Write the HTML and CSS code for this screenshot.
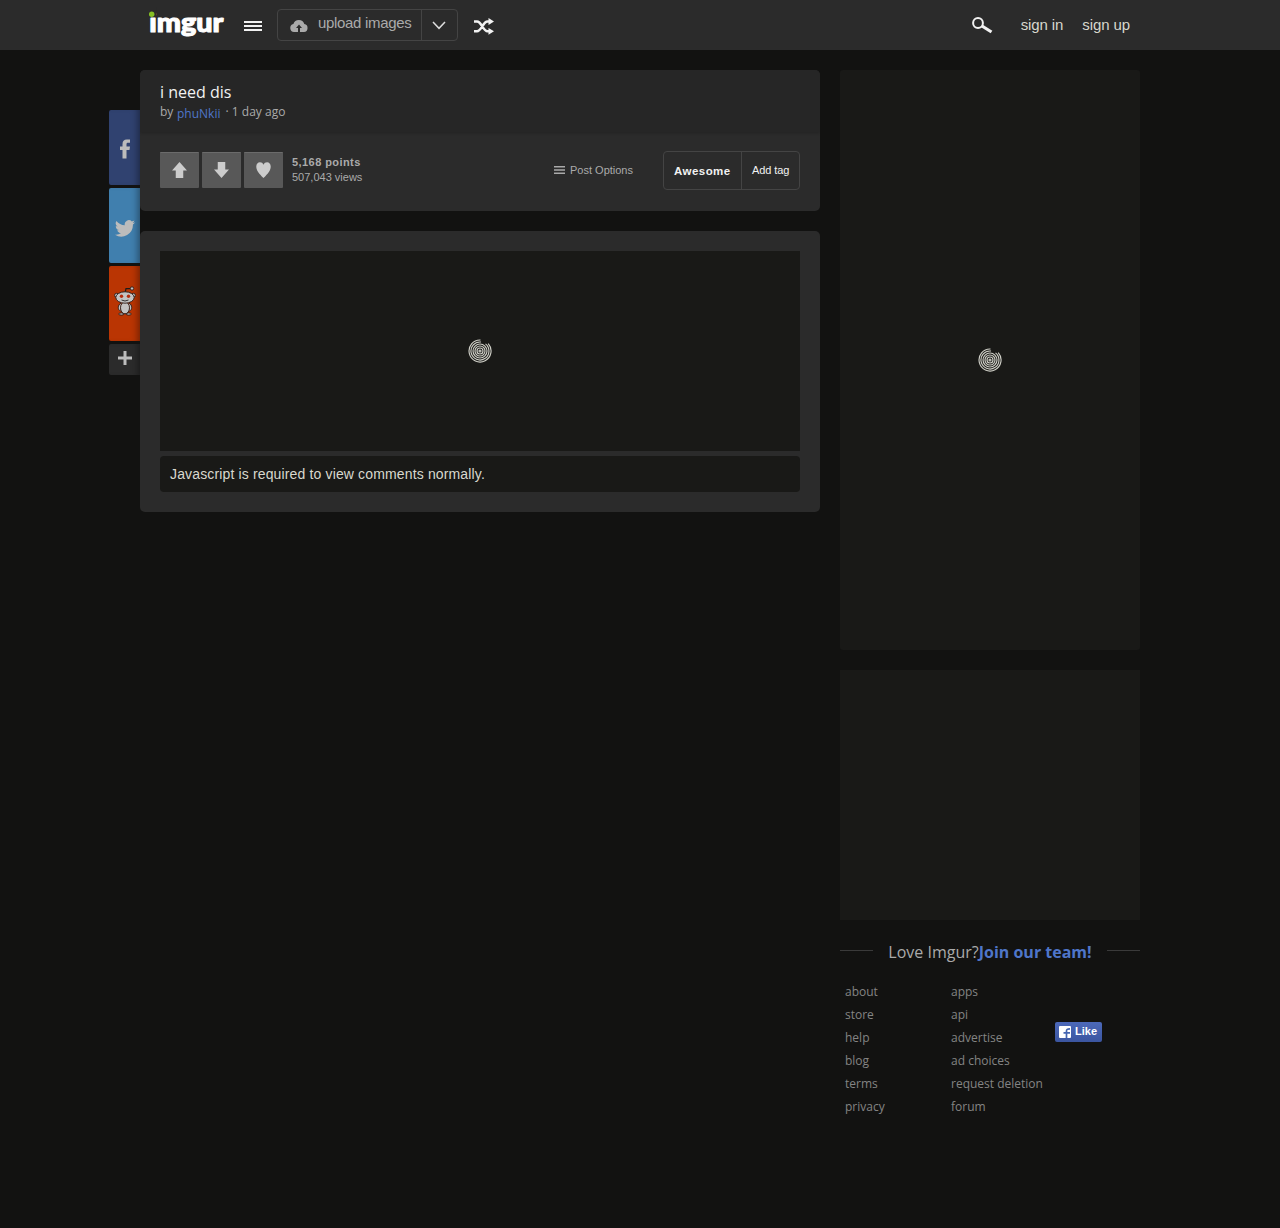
FILE: index.html
```html
<!DOCTYPE html>
<html lang="en">
<head>
<meta charset="utf-8">
<title>i need dis - Imgur</title>
<link rel="stylesheet" href="styles.css">
</head>
<body>
<header class="topbar">
  <div class="topbar-inner">
    <a class="logo"><svg width="78" height="36" viewBox="0 0 78 36"><text class="logo-text" x="1.300" y="24.800" textLength="74" lengthAdjust="spacingAndGlyphs">imgur</text><rect x="0" y="0" width="8.500" height="10" fill="#2b2b2b"/><circle cx="3.700" cy="7.300" r="2.700" fill="#85bf25"/></svg></a>
    <a class="menu"><svg width="18" height="10"><path d="M0 1h18M0 5h18M0 9h18" stroke="#f2f2f2" stroke-width="2"/></svg></a>
    <div class="upload">
      <a class="upload-main"><svg width="18" height="12" viewBox="0 0 18 12"><path fill="#aaa" d="M4 12a4 4 0 0 1-.6-7.900A5.700 5.700 0 0 1 14.300 4.100 4 4 0 0 1 14 12h-4V8h2L9 4.500 6 8h2v4z"/></svg><span>upload images</span></a>
      <a class="upload-more"><svg width="14" height="9" viewBox="0 0 14 9"><path d="M1 1l6 6.300L13 1" fill="none" stroke="#ddd" stroke-width="1.500"/></svg></a>
    </div>
    <a class="shuffle"><svg width="20" height="17" viewBox="0 0 20 17"><path d="M0 3.500h3c4.500 0 6 9.800 10.500 9.800H16M0 13.300h3c4.500 0 6-9.800 10.500-9.800H16" fill="none" stroke="#f2f2f2" stroke-width="2.500"/><path d="M14.500 0L20 3.500l-5.500 3.400zM14.500 9.900l5.500 3.400-5.500 3.500z" fill="#f2f2f2"/></svg></a>
    <nav class="account">
      <a class="search"><svg width="21" height="17" viewBox="0 0 21 17"><circle cx="6" cy="6" r="4.900" fill="none" stroke="#f2f2f2" stroke-width="2"/><path d="M10 9l9.500 6" stroke="#f2f2f2" stroke-width="3.200"/></svg></a>
      <a class="signin">sign in</a><a class="signup">sign up</a>
    </nav>
  </div>
</header>
<div class="page">
  <aside class="share">
    <a class="share-btn facebook"><svg width="12" height="20" viewBox="0 0 12 20"><path fill="#bcbcbc" d="M3.500 19.500V11H1V7.500h2.500V5.200C3.500 2 5 .5 7.800.5H11v3.300H9C7.800 3.800 7.500 4.300 7.500 5.300v2.200H11l-.5 3.500h-3v8.500z"/></svg></a>
    <a class="share-btn twitter"><svg width="20" height="17" viewBox="0 0 24 20"><path fill="#bcbcbc" d="M24 2.400a10 10 0 0 1-2.800.8A5 5 0 0 0 23.300.5a10 10 0 0 1-3.100 1.200A4.900 4.900 0 0 0 11.800 6.200 14 14 0 0 1 1.700 1a4.900 4.900 0 0 0 1.500 6.600 5 5 0 0 1-2.200-.6 4.900 4.900 0 0 0 3.900 4.900 5 5 0 0 1-2.200.1 4.900 4.900 0 0 0 4.600 3.400A9.900 9.900 0 0 1 0 17.500 14 14 0 0 0 21.500 5.100 10 10 0 0 0 24 2.400z"/></svg></a>
    <a class="share-btn reddit"><svg width="22" height="30" viewBox="0 0 22 30"><path d="M11 7l1-4.500 5 .2" fill="none" stroke="#1b1b1b" stroke-width="1.200"/><g fill="#c3c3c3" stroke="#2a1a15" stroke-width=".9"><circle cx="18" cy="2.500" r="1.700"/><circle cx="2.600" cy="9.300" r="2"/><circle cx="19.400" cy="9.300" r="2"/><ellipse cx="7.300" cy="28" rx="2.700" ry="1.100"/><ellipse cx="14.700" cy="28" rx="2.700" ry="1.100"/><path d="M7 17c-3.500 2-3.500 7-.5 8M15 17c3.500 2 3.500 7 .5 8"/><ellipse cx="11" cy="21.800" rx="4.500" ry="6"/><ellipse cx="11" cy="11.500" rx="9.200" ry="5.700"/></g><circle cx="7.500" cy="10.300" r="1.700" fill="#b52b0c"/><circle cx="14.500" cy="10.300" r="1.700" fill="#b52b0c"/><path d="M7.500 14q3.500 2 7 0" fill="none" stroke="#333"/></svg></a>
    <a class="share-btn more"><svg width="14" height="14"><path d="M7 0v14M0 7h14" stroke="#bcbcbc" stroke-width="3"/></svg></a>
  </aside>
  <main class="main">
    <section class="card">
      <div class="post-head">
        <h1>i need dis</h1>
        <p>by <a class="author">phuNkii</a> · 1 day ago</p>
      </div>
      <div class="post-bar">
        <div class="votes">
          <a class="vote"><svg width="15" height="16" viewBox="0 0 16 16" preserveAspectRatio="none"><path d="M8 0l8 8.500h-4V16H4V8.500H0z" fill="#ccc"/></svg></a>
          <a class="vote"><svg width="15" height="16" viewBox="0 0 16 16" preserveAspectRatio="none"><path d="M8 16L0 7.500h4V0h8v7.500h4z" fill="#ccc"/></svg></a>
          <a class="vote"><svg width="15" height="16" viewBox="0 0 16 16" preserveAspectRatio="none"><path d="M8 16C3 11.500.3 8.500.3 4.500.3 1.800 2 .2 4.200.2 6 .2 7.300 1 8 2.700 8.700 1 10 .2 11.800.2c2.200 0 3.900 1.600 3.900 4.300C15.700 8.500 13 11.500 8 16z" fill="#ccc"/></svg></a>
        </div>
        <div class="stats"><b>5,168 points</b><span>507,043 views</span></div>
        <a class="options"><svg width="11" height="8"><path d="M0 .7h11M0 4h11M0 7.300h11" stroke="#aaa" stroke-width="1.500"/></svg><span>Post Options</span></a>
        <div class="tags"><a class="tag">Awesome</a><a class="add">Add tag</a></div>
      </div>
    </section>
    <section class="card content">
      <div class="image-box"><svg class="spinner" viewBox="0 0 24 24"><g fill="none" stroke="#d0d0c8" stroke-width="1.150"><circle cx="12" cy="12" r="1"/><circle cx="12" cy="12" r="3"/><circle cx="12" cy="12" r="5"/><circle cx="12" cy="12" r="7"/><path d="M17.500 4.900A9 9 0 1 1 13 3.050M20.200 4.600A11 11 0 1 1 12.500 1"/></g></svg></div>
      <p class="notice">Javascript is required to view comments normally.</p>
    </section>
  </main>
  <aside class="sidebar">
    <div class="panel feed"><svg class="spinner" viewBox="0 0 24 24"><g fill="none" stroke="#d0d0c8" stroke-width="1.150"><circle cx="12" cy="12" r="1"/><circle cx="12" cy="12" r="3"/><circle cx="12" cy="12" r="5"/><circle cx="12" cy="12" r="7"/><path d="M17.500 4.900A9 9 0 1 1 13 3.050M20.200 4.600A11 11 0 1 1 12.500 1"/></g></svg></div>
    <div class="panel ad"></div>
    <div class="team"><span>Love Imgur?<a>Join our team!</a></span></div>
    <footer class="links">
      <ul><li>about</li><li>store</li><li>help</li><li>blog</li><li>terms</li><li>privacy</li></ul>
      <ul><li>apps</li><li>api</li><li>advertise</li><li>ad choices</li><li>request deletion</li><li>forum</li></ul>
      <a class="like"><svg width="12" height="12"><rect width="12" height="12" rx="1" fill="#fff"/><path d="M4.500 6.800H11M7.500 12V5c0-1.500.7-2.200 3.500-2.200" fill="none" stroke="#4565b1" stroke-width="1.700"/></svg><span>Like</span></a>
    </footer>
  </aside>
</div>
</body>
</html>
```
FILE: styles.css
```css
* { box-sizing: border-box; }
body { margin: 0; min-height: 1228px; background: #121211; color: #aaa; font: 12px "Open Sans", sans-serif; }
h1, p, ul { margin: 0; padding: 0; }
ul { list-style: none; }
svg { display: block; flex: none; }

.topbar { height: 50px; background: #2b2b2b; font-family: "Liberation Sans", Arial, sans-serif; }
.topbar-inner { width: 1000px; height: 50px; margin: 0 auto; display: flex; align-items: flex-start; }
.logo { margin: 7px 0 0 8px; }
.logo svg { overflow: visible; }
.logo-text { font: 900 26px Lato, sans-serif; fill: #fff; stroke: #fff; stroke-width: 1.1; stroke-linejoin: round; }
.menu { margin: 21px 0 0 18px; }
.upload { display: flex; width: 181px; height: 32px; margin: 9px 0 0 15px; border: 1px solid #444; border-radius: 4px; }
.upload-main { display: flex; width: 144px; padding: 4px 0 0 12px; gap: 10px; border-right: 1px solid #444; font-size: 15px; line-height: 18px; letter-spacing: -.32px; color: #aaa; white-space: nowrap; }
.upload-main svg { margin-top: 6px; }
.upload-more { padding: 11px 0 0 10px; }
.shuffle { margin: 18px 0 0 16px; }
.account { display: flex; margin-left: auto; padding-right: 10px; font-size: 15px; line-height: 50px; letter-spacing: -.1px; color: #d8d8ce; }
.search { padding-top: 17px; margin-right: 28px; }
.signin { margin-right: 19px; }

.page { width: 1031px; margin: 20px 0 0 calc(50% - 531px); display: flex; align-items: flex-start; }
.share { width: 31px; margin-top: 40px; display: flex; flex-direction: column; gap: 3px; }
.share-btn { height: 75px; display: flex; align-items: center; justify-content: center; border-radius: 2px 0 0 2px; box-shadow: inset -7px 0 7px -5px rgba(0,0,0,.4); }
.facebook { background: #304270; padding-top: 2px; }
.twitter { background: #407fae; padding-top: 5px; }
.reddit { background: #ba3503; padding-bottom: 5px; }
.more { height: 31px; background: #2b2b2b; padding-bottom: 3px; }

.main { width: 680px; display: flex; flex-direction: column; gap: 20px; }
.card { background: #2b2b2b; border-radius: 5px; overflow: hidden; }
.post-head { height: 62px; padding: 11px 20px 0; background: #262626; box-shadow: 0 1px 3px rgba(0,0,0,.2); }
.post-head h1 { font-size: 16px; font-weight: 400; line-height: 22px; color: #f2f2f2; }
.post-head p { line-height: 17px; }
.author { position: relative; top: 2px; margin: 0 2px 0 .5px; color: #4f76c9; }
.post-bar { height: 79px; padding: 19px 20px 0; display: flex; align-items: flex-start; font: 11px "Liberation Sans", Arial, sans-serif; }
.votes { display: flex; gap: 3px; padding-top: 1px; }
.vote { width: 39px; height: 36px; display: flex; align-items: center; justify-content: center; padding-bottom: 1px; background: #585858; border-top: 1px solid #6b6b6b; border-radius: 1px; }
.stats { display: flex; flex-direction: column; margin: 4px 0 0 9px; line-height: 15px; }
.stats b { letter-spacing: .43px; }
.options { display: flex; align-items: center; gap: 5px; margin-left: auto; height: 38px; }
.tags { display: flex; width: 137px; height: 39px; margin-left: 30px; border: 1px solid #444; border-radius: 4px; line-height: 37px; color: #f2f2f2; white-space: nowrap; }
.tag { width: 78px; padding: 1px 0 0 10px; border-right: 1px solid #444; font-weight: 700; font-size: 11.500px; letter-spacing: .45px; }
.add { padding-left: 10px; letter-spacing: -.1px; }

.content { height: 281px; padding: 20px; }
.image-box { height: 200px; display: flex; align-items: center; justify-content: center; background: #191917; }
.spinner { width: 24px; height: 24px; }
.notice { height: 36px; margin-top: 5px; padding-left: 10px; border-radius: 4px; background: #191917; color: #d8d8ce; font: 14px/36px "Liberation Sans", Arial, sans-serif; letter-spacing: .145px; }

.sidebar { width: 300px; margin-left: 20px; }
.panel { background: #191917; border-radius: 3px; }
.feed { height: 580px; display: flex; align-items: center; justify-content: center; }
.ad { height: 250px; margin-top: 20px; border-radius: 0; }
.team { display: flex; align-items: center; gap: 15px; margin-top: 19px; height: 24px; font-size: 16px; white-space: nowrap; }
.team::before, .team::after { content: ""; flex: 1; height: 1px; margin-bottom: 2px; background: #3a3a3a; }
.team span { padding-top: 2px; }
.team a { color: #4f76c9; font-weight: 700; }
.links { display: flex; padding: 17px 5px 0; line-height: 23px; color: #848484; }
.links ul { width: 106px; white-space: nowrap; }
.links ul + ul { width: 104px; }
.like { display: flex; width: 47px; height: 20px; margin-top: 42px; padding: 4px; gap: 4px; border-radius: 2px; background: linear-gradient(#4c69ba, #3b55a0); color: #fff; font: bold 11px/11px "Liberation Sans", Arial, sans-serif; }
```
